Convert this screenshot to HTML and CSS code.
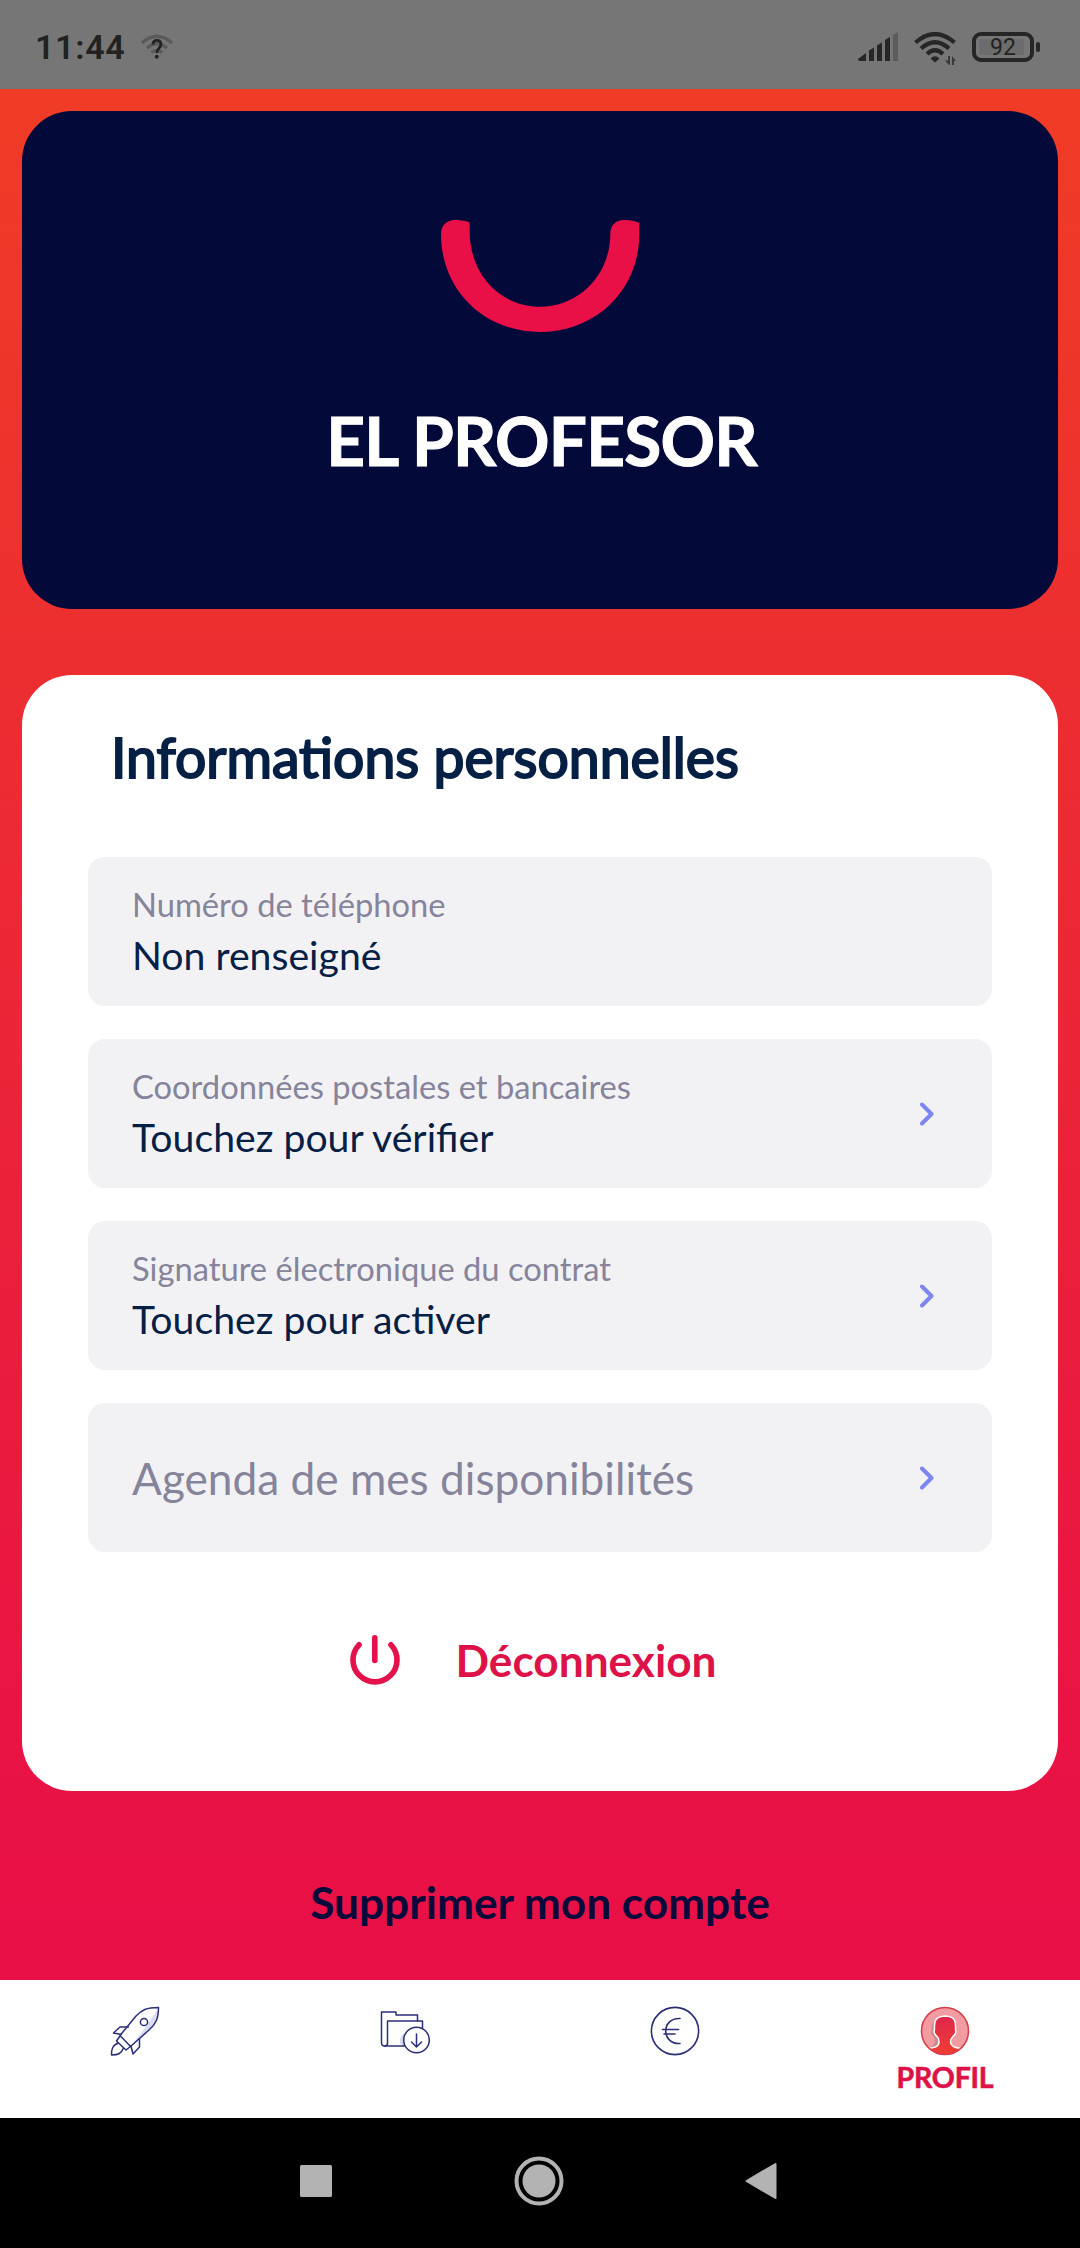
FILE: index.html
```
<!DOCTYPE html>
<html lang="fr">
<head>
  <meta charset="UTF-8" />
  <meta name="viewport" content="width=device-width, initial-scale=1.0"/>
  <title>Profil</title>
  <link rel="stylesheet" href="styles.css">
</head>
<body>
  <div class="status-bar">
    <span class="time">11:44</span>
    <svg class="wifi-unknown" width="32" height="26" viewBox="0 0 32 26">
      <g fill="none" stroke="#5a5a5a" stroke-width="3.200">
        <path d="M1 9 Q16 -4.500 31 9"/>
        <path d="M6 14 Q16 5.500 26 14"/>
        <path d="M10.500 18.500 Q16 14 21.500 18.500"/>
      </g>
      <path d="M12 10.500 C12.200 5 20 5.200 20 10.200 C20 14 16 14 16 19" fill="none" stroke="#222" stroke-width="2.800"/>
      <circle cx="15.800" cy="22.800" r="2" fill="#222"/>
    </svg>
    <div class="status-right">
      <svg width="41" height="30" viewBox="0 0 41 30" fill="#262626">
        <path d="M0 27 L8 21 V29 H2 Q0 29 0 27Z"/>
        <path d="M11 18.500 L16 15.500 V29 H11Z"/>
        <path d="M19 13.500 L24 10.500 V29 H19Z"/>
        <path d="M27 8 L32 5 V29 H27Z"/>
        <path d="M35 3 L40 0 V29 H35Z" fill="#5c5c5c"/>
      </svg>
      <svg class="wifi" width="43" height="34" viewBox="0 0 43 34">
        <g fill="none" stroke="#262626" stroke-width="4.200">
          <path d="M1.500 10.500 Q21 -6.500 40.500 10.500"/>
          <path d="M7 16.500 Q21 4 35 16.500"/>
          <path d="M13 22 Q21 14.500 29 22"/>
        </g>
        <path d="M16.500 26.500 Q21 22 25.500 26.500 L21 30.500Z" fill="#262626"/>
        <path d="M31 28.500 L34 28.500 V24 H36 V33 H35Z M38 24 L42 29 H40 V33 H38Z" fill="#3a3a3a"/>
      </svg>
      <div class="battery"><span>92</span></div>
    </div>
  </div>

  <main>
    <section class="hero">
      <svg width="199" height="112" viewBox="0 0 199 112">
        <path d="M0 14 C0 5 6 0 14 0 C20 0 26 1 28.700 2.500 V12 C28.700 54 59 86.700 99 86.700 C139 86.700 169.300 54 169.300 14 C169.300 5 175 0 183 0 C190 0 196 1.500 198.300 3 V14 C198.300 70 155 112 99 112 C43 112 0 70 0 14Z" fill="#e90f47"/>
      </svg>
      <h1>EL PROFESOR</h1>
    </section>

    <section class="card">
      <h2>Informations personnelles</h2>
      <div class="rows">
        <div class="row">
          <div class="row-text">
            <span class="label">Numéro de téléphone</span>
            <span class="value">Non renseigné</span>
          </div>
        </div>
        <div class="row">
          <div class="row-text">
            <span class="label">Coordonnées postales et bancaires</span>
            <span class="value">Touchez pour vérifier</span>
          </div>
          <svg width="24" height="24" viewBox="0 0 24 24"><path class="chevron" d="M7 2.500 L16.500 12 L7 21.500"/></svg>
        </div>
        <div class="row">
          <div class="row-text">
            <span class="label">Signature électronique du contrat</span>
            <span class="value">Touchez pour activer</span>
          </div>
          <svg width="24" height="24" viewBox="0 0 24 24"><path class="chevron" d="M7 2.500 L16.500 12 L7 21.500"/></svg>
        </div>
        <div class="row">
          <div class="row-text">
            <span class="agenda">Agenda de mes disponibilités</span>
          </div>
          <svg width="24" height="24" viewBox="0 0 24 24"><path class="chevron" d="M7 2.500 L16.500 12 L7 21.500"/></svg>
        </div>
      </div>
      <div class="logout">
        <svg width="50" height="50" viewBox="0 0 50 50" fill="none" stroke="#e4114a" stroke-width="5.600" stroke-linecap="round">
          <path d="M9 9.800 A22 22 0 1 0 41 9.800"/>
          <path d="M24.800 2.800 V25.500"/>
        </svg>
        <span>Déconnexion</span>
      </div>
    </section>

    <a class="delete">Supprimer mon compte</a>
  </main>

  <nav class="tabs">
    <div class="tab">
      <svg width="50" height="50" viewBox="0 0 50 50" fill="none" stroke="#2b2f78" stroke-width="1.500" stroke-linejoin="round">
        <path d="M48 3 C48 12 45 18 38 24 L21 40 L32 26Z" fill="#dcdcf0" stroke="none"/>
        <path d="M48.500 1.500 C36 1.500 32 4 26 10 L10 29.500 L20.500 40.500 L39 24 C46 18 48.500 12 48.500 1.500Z"/>
        <circle cx="34" cy="16" r="3.600"/>
        <path d="M19 21 H10 L3.500 27 L11.500 28.500"/>
        <path d="M29.500 33 V41 L23 48 L21 40"/>
        <path d="M10 30 L6.500 35 L16 44 L20.500 40.500"/>
        <path d="M8.500 37 C2.500 39 1.500 43 1.500 49 C8 49 11 48 13.500 42"/>
      </svg>
    </div>
    <div class="tab">
      <svg width="50" height="50" viewBox="0 0 50 50" fill="none" stroke="#2b2f78" stroke-width="1.500" stroke-linejoin="round" stroke-linecap="round">
        <path d="M24 27 Q17 34 22 40 H26Z" fill="#d3d5ee" stroke="none"/>
        <path d="M37.500 15 V9 H16 V6 H1.500 V36.500 Q1.500 40 4.500 40 H26"/>
        <path d="M42.500 22 V15 H7.500 V37 Q7.500 40 4.500 40"/>
        <circle cx="36.500" cy="34" r="12.800" fill="#fff"/>
        <path d="M36.500 28 V40.500 M31.500 36 L36.500 41 L41.500 36"/>
      </svg>
    </div>
    <div class="tab">
      <svg width="50" height="50" viewBox="0 0 50 50" fill="none" stroke="#2b2f78" stroke-width="1.600" stroke-linecap="round">
        <circle cx="25" cy="25" r="23.600"/>
        <path d="M30 12.500 C11 11.500 11 38.500 30 37.500 M12.500 23.500 H28.500 M14 28 H25"/>
      </svg>
    </div>
    <div class="tab active">
      <svg width="50" height="50" viewBox="0 0 50 50">
        <defs>
          <clipPath id="disc"><circle cx="25" cy="25" r="23.500"/></clipPath>
          <linearGradient id="skin" x1="0" y1="0" x2="0" y2="1">
            <stop offset="0" stop-color="#e0264c"/>
            <stop offset="1" stop-color="#ef4030"/>
          </linearGradient>
        </defs>
        <circle cx="25" cy="25" r="23.500" fill="#f29ba1"/>
        <g clip-path="url(#disc)">
          <path d="M17 14 Q10 17 12 24 C9 28 15 30 15 35 Q15 39 8 43 H22 V14Z" fill="#c98a91"/>
          <path d="M7 42.500 C14 42 19 41 19 36 Q19 33 17.500 31 C15 29 13.500 26 14.500 23.500 C14 15 15 10.500 25.500 10 C35 10.500 36 15 35.500 23.500 C36.500 26 35 29 32.500 31 Q30.500 33 30.500 36 C31 41 36 42 43 42.500 V52 H7Z" fill="url(#skin)" stroke="#fff" stroke-width="1.500"/>
        </g>
        <circle cx="25" cy="25" r="23.500" fill="none" stroke="#d43d49" stroke-width="1.500"/>
      </svg>
      <span>PROFIL</span>
    </div>
  </nav>

  <footer class="system-nav">
    <svg width="32" height="32" viewBox="0 0 32 32"><rect width="32" height="32" rx="1.500" fill="#b3b3b3"/></svg>
    <svg width="50" height="50" viewBox="0 0 50 50">
      <circle cx="25" cy="25" r="22.500" fill="none" stroke="#b3b3b3" stroke-width="4"/>
      <circle cx="25" cy="25" r="16.500" fill="#b3b3b3"/>
    </svg>
    <svg width="32" height="38" viewBox="0 0 32 38"><path d="M1.500 19 L30.500 2 V36Z" fill="#b3b3b3" stroke="#b3b3b3" stroke-width="2" stroke-linejoin="round"/></svg>
  </footer>
</body>
</html>
```
FILE: styles.css
```
* {
  box-sizing: border-box;
}

body {
  margin: 0;
  width: 1080px;
  height: 2248px;
  display: flex;
  flex-direction: column;
  font-family: Lato, sans-serif;
  color: #062045;
}

svg {
  display: block;
  flex-shrink: 0;
}

/* ---- Barre d'état ---- */
.status-bar {
  height: 89px;
  padding: 5px 46px 0 35px;
  display: flex;
  align-items: center;
  background: #767676;
  color: #222;
  font-family: Roboto, sans-serif;
}

.time {
  font-size: 34px;
  font-weight: 600;
  letter-spacing: 0.7px;
}

.wifi-unknown {
  margin-left: 16px;
}

.status-right {
  margin-left: auto;
  display: flex;
  align-items: center;
}

.wifi {
  margin: 3px 0 0 15px;
}

.battery {
  position: relative;
  width: 62px;
  height: 30px;
  margin-left: 15px;
  border: 4px solid #262626;
  border-radius: 9px;
  padding: 3px;
  display: flex;
}

.battery span {
  flex: 1;
  background: linear-gradient(90deg, #6c6c6c 94%, transparent 94%);
  border-radius: 2px;
  font-size: 23px;
  line-height: 17px;
  text-align: center;
}

.battery::after {
  content: "";
  position: absolute;
  right: -10px;
  top: 6px;
  width: 4px;
  height: 10px;
  border-radius: 2px;
  background: #262626;
}

/* ---- Contenu ---- */
main {
  height: 1891px;
  padding: 22px;
  display: flex;
  flex-direction: column;
  background: linear-gradient(#f03c26, #ec2e30 30%, #e91245 90%, #e81047);
}

.hero {
  height: 498px;
  padding-top: 109px;
  display: flex;
  flex-direction: column;
  align-items: center;
  background: #030a3a;
  border-radius: 50px;
}

.hero h1 {
  margin: 67px 0 0 3px;
  font-size: 67.5px;
  line-height: 82px;
  font-weight: bold;
  letter-spacing: -0.8px;
  color: #fff;
  -webkit-text-stroke: 1px #fff;
}

.card {
  height: 1116px;
  margin-top: 66px;
  padding: 48px 66px 0;
  background: #fff;
  border-radius: 50px;
}

.card h2 {
  margin: 0 0 66px 23px;
  font-size: 55.3px;
  line-height: 68px;
  font-weight: normal;
  -webkit-text-stroke: 2px #062045;
}

.rows {
  display: flex;
  flex-direction: column;
  gap: 33px;
}

.row {
  height: 149px;
  padding: 0 53px 0 44px;
  display: flex;
  align-items: center;
  justify-content: space-between;
  background: #f2f2f5;
  border-radius: 17px;
}

.row-text {
  display: flex;
  flex-direction: column;
  gap: 7px;
}

.label {
  font-size: 32.7px;
  line-height: 40px;
  color: #86849a;
}

.value {
  font-size: 39.2px;
  line-height: 46px;
}

.agenda {
  padding-top: 1px;
  font-size: 44.2px;
  line-height: 54px;
  color: #86849a;
}

.chevron {
  fill: none;
  stroke: #7b87ee;
  stroke-width: 4;
  stroke-linecap: round;
  stroke-linejoin: round;
}

.logout {
  margin: 81px 14px 0 0;
  display: flex;
  align-items: center;
  justify-content: center;
  gap: 56px;
  font-size: 44.2px;
  line-height: 54px;
  font-weight: bold;
  color: #dd1248;
}

.delete {
  margin-top: 84px;
  font-size: 44.2px;
  line-height: 54px;
  font-weight: bold;
  text-align: center;
  color: #070a3a;
}

/* ---- Onglets ---- */
.tabs {
  height: 138px;
  padding-top: 26px;
  display: grid;
  grid-template-columns: repeat(4, 1fr);
  background: #fff;
}

.tab {
  display: flex;
  flex-direction: column;
  align-items: center;
}

.tab span {
  margin-top: 3px;
  font-size: 28.5px;
  line-height: 36px;
  font-weight: bold;
  letter-spacing: -0.2px;
  color: #dd1248;
  -webkit-text-stroke: 0.6px #dd1248;
}

/* ---- Navigation système ---- */
.system-nav {
  flex: 1;
  padding: 0 303px 5px 300px;
  display: flex;
  align-items: center;
  justify-content: space-between;
  background: #000;
}
```
